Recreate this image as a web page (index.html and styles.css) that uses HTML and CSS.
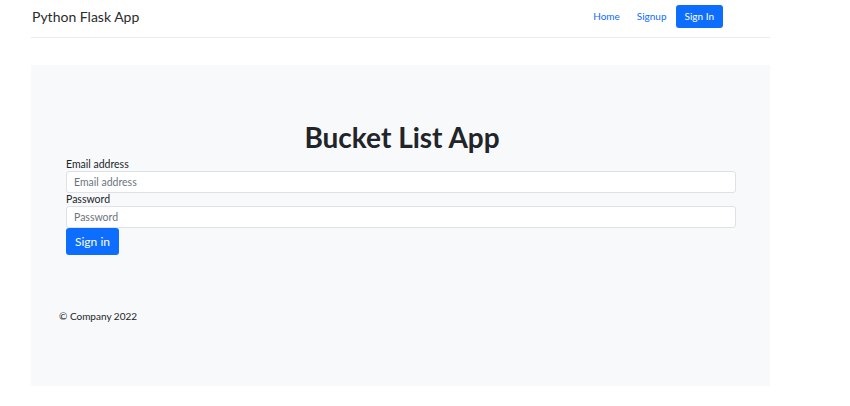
FILE: index.html
```html
<!DOCTYPE html>
<html lang="en">

<head>
    <meta charset="UTF-8" />
    <meta name="viewport" content="width=device-width, initial-scale=1.0" />
    <title>Python Flask Bucket List App</title>
    <link rel="stylesheet" href="styles.css">
</head>

<body>

    <div class="container">
        <header class="header">
            <span class="brand">Python Flask App</span>
            <nav class="nav">
                <a class="nav-link" href="#">Home</a>
                <a class="nav-link" href="#">Signup</a>
                <a class="nav-link active" href="#">Sign In</a>
            </nav>
        </header>

        <div class="jumbotron">
            <h1>Bucket List App</h1>
            <form class="form-signin">
                <label for="inputEmail">Email address</label>
                <input type="email" id="inputEmail" class="form-control" placeholder="Email address">
                <label for="inputPassword">Password</label>
                <input type="password" id="inputPassword" class="form-control" placeholder="Password">
                <button class="btn" type="button">Sign in</button>
            </form>

            <footer class="footer">
                <p>&copy; Company 2022</p>
            </footer>
        </div>
    </div>

</body>

</html>
```

FILE: styles.css
```css
* {
    box-sizing: border-box;
    margin: 0;
    padding: 0;
}

body {
    font-family: Lato, "Noto Sans", sans-serif;
    color: #212529;
    background: #fff;
}

.container {
    width: 739px;
    margin-left: 31px;
}

.header {
    display: flex;
    justify-content: space-between;
    align-items: center;
    height: 38px;
    padding-bottom: 5px;
    border-bottom: 1px solid #e9ecef;
}

.brand {
    font-size: 14px;
    padding-left: 1px;
    color: #2b2b2b;
}

.nav {
    display: flex;
    align-items: center;
    margin-right: 47px;
}

.nav-link {
    font-size: 10px;
    line-height: 13px;
    color: #0d6efd;
    text-decoration: none;
    padding: 5px 8px;
    border-radius: 3px;
}

.nav-link:first-child {
    padding-left: 6px;
    padding-right: 9px;
}

.nav-link.active {
    background: #0d6efd;
    color: #fff;
    padding: 5px 9px;
    margin-left: 1px;
}

.jumbotron {
    margin-top: 27px;
    height: 321px;
    background: #f8f9fa;
    padding: 55px 34px 0 35px;
}

h1 {
    text-align: center;
    font-size: 28px;
    font-weight: 700;
    line-height: 38px;
    margin-top: -2px;
    margin-bottom: 2px;
    padding-left: 2px;
}

.form-signin label {
    display: block;
    font-size: 10.5px;
    line-height: 13px;
}

.form-control {
    display: block;
    width: 100%;
    height: 22px;
    padding: 0 7px;
    font-family: inherit;
    font-size: 10.5px;
    border: 1px solid #dee2e6;
    border-radius: 3px;
    background: #fff;
    color: #212529;
}

.form-control::placeholder {
    color: #6c757d;
}

.btn {
    display: block;
    width: 53px;
    height: 27px;
    margin-top: 0;
    font-family: inherit;
    font-size: 12px;
    color: #fff;
    background: #0d6efd;
    border: none;
    border-radius: 3px;
}

.footer {
    margin-top: 55px;
    margin-left: -7px;
    font-size: 10px;
}
```
